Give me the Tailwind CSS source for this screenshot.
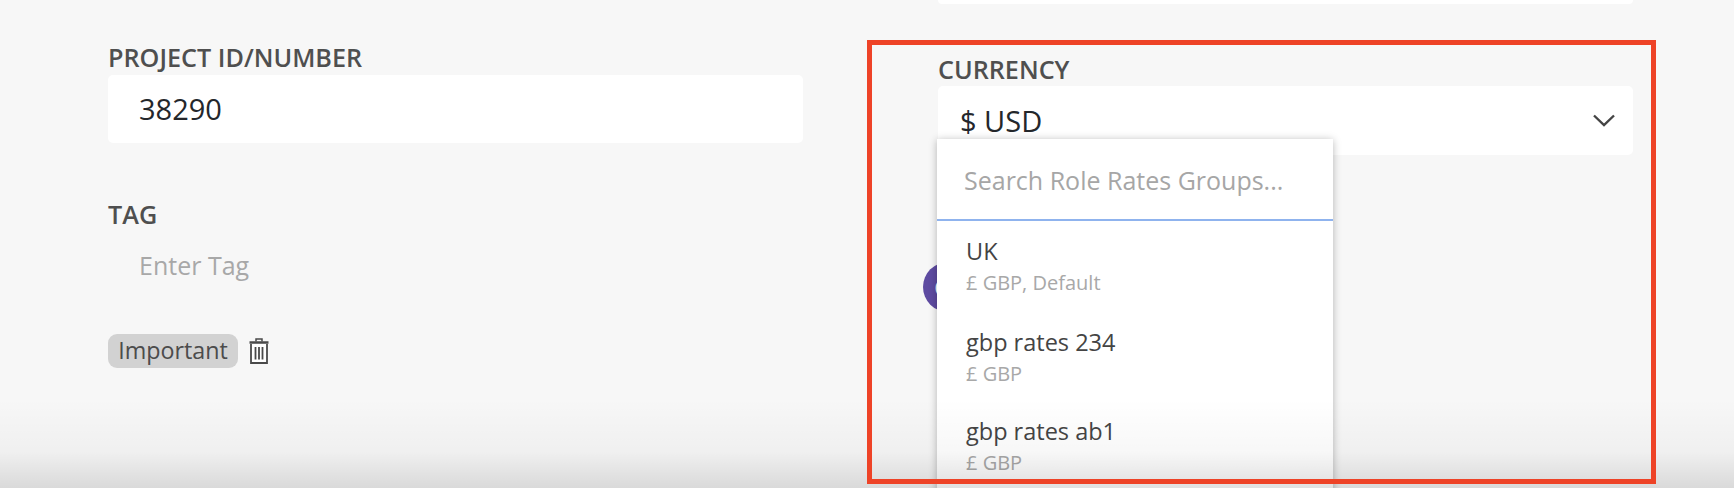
<!DOCTYPE html>
<html lang="en">
<head>
  <meta charset="UTF-8">
  <title>Project settings</title>
  <script src="https://cdn.jsdelivr.net/npm/@tailwindcss/browser@4"></script>
</head>
<body class="bg-[#f7f7f7] font-['Open_Sans',sans-serif]">
  <div class="relative w-[1734px] h-[488px] overflow-hidden flex pl-[108px] gap-[135px]">
    <!-- left column -->
    <div class="w-[695px] pt-[42px]">
      <label class="block h-[33px] leading-[30px] text-[25.200px] font-semibold text-[#4f4f4f]">PROJECT ID/NUMBER</label>
      <div class="h-[68px] bg-white rounded-[5px] pl-[31px] leading-[68px] text-[29px] text-[#24272b]">38290</div>
      <label class="block mt-[56px] h-[30px] leading-[30px] text-[25.200px] font-semibold text-[#4f4f4f]">TAG</label>
      <div class="mt-[14px] h-[44px] pl-[31px] leading-[44px] text-[25px] text-[#a8a8a8]">Enter Tag</div>
      <div class="mt-[47px] flex items-center gap-[11px]">
        <span class="h-[34px] w-[130px] rounded-[9px] bg-[#d2d2d2] text-center leading-[33px] text-[23.300px] text-[#4c4c4c]">Important</span>
        <svg class="w-[20px] h-[26px]" viewBox="0 0 20 26" fill="none" stroke="#4a4a4a">
          <path d="M7 3.500V1h6v2.500" stroke-width="1.500"/>
          <path d="M0.500 4.500h19" stroke-width="2.500"/>
          <path d="M2 6v19h16V6" stroke-width="1.800" fill="#fff"/>
          <path d="M6.500 9v12.500M10 9v12.500M13.500 9v12.500" stroke-width="1.800"/>
        </svg>
      </div>
    </div>

    <!-- right column -->
    <div class="w-[695px] relative">
      <div class="h-[4px] bg-white rounded-b-[5px]"></div>
      <label class="block mt-[50px] h-[32px] leading-[30px] text-[25.200px] font-semibold text-[#4f4f4f]">CURRENCY</label>
      <div class="h-[69px] bg-white rounded-[5px] pl-[22px] pr-[18px] flex items-start justify-between">
        <span class="leading-[69px] text-[29px] text-[#24272b]">$ USD</span>
        <svg class="mt-[28px] w-[22px] h-[13px]" viewBox="0 0 22 13" fill="none" stroke="#444" stroke-width="2.400"><path d="M1 1.500l10 9.500 10-9.500"/></svg>
      </div>
      <!-- avatar behind the open dropdown -->
      <div class="absolute left-[-15px] top-[262px] w-[50px] h-[50px] rounded-full bg-[#5e4ba1] pl-[11px] leading-[50px] text-[26px] text-white">G</div>
      <!-- dropdown -->
      <div class="absolute left-[-1px] top-[139px] w-[396px] h-[360px] bg-white shadow-[0_1px_8px_rgba(0,0,0,0.28)]">
        <div class="h-[82px] border-b-2 border-[#8fb3ee] pl-[27px] leading-[82px] text-[25px] text-[#a6a6a6]">Search Role Rates Groups...</div>
        <div class="pl-[29px] pt-[14px]">
          <div class="h-[32px] leading-[32px] text-[23.500px] text-[#444]">UK</div>
          <div class="h-[32px] leading-[32px] text-[20px] text-[#a8a8a8]">£ GBP, Default</div>
          <div class="mt-[27px] h-[32px] leading-[32px] text-[23.500px] text-[#444]">gbp rates 234</div>
          <div class="h-[32px] leading-[32px] text-[20px] text-[#a8a8a8]">£ GBP</div>
          <div class="mt-[25px] h-[32px] leading-[32px] text-[23.500px] text-[#444]">gbp rates ab1</div>
          <div class="h-[32px] leading-[32px] text-[20px] text-[#a8a8a8]">£ GBP</div>
        </div>
      </div>
    </div>

    <!-- bottom fade over the page -->
    <div class="absolute left-0 right-0 bottom-0 h-[90px] bg-gradient-to-b from-black/0 via-black/3 via-60% to-black/12"></div>
    <!-- red annotation box -->
    <div class="absolute left-[867px] top-[40px] w-[789px] h-[444px] border-[5px] border-[#ee4327]"></div>
  </div>
</body>
</html>
